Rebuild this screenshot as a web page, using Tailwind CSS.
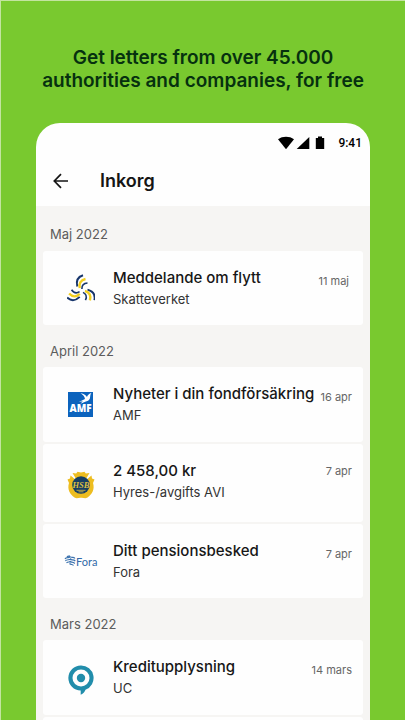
<!DOCTYPE html>
<html lang="en">

<head>
    <meta charset="UTF-8">
    <meta name="viewport" content="width=device-width, initial-scale=1.0">
    <title>Inkorg</title>
    <script src="https://cdn.jsdelivr.net/npm/@tailwindcss/browser@4"></script>
</head>

<body class="bg-[#79c92f] font-['Inter',sans-serif]">
    <div class="flex h-screen flex-col overflow-hidden border-t border-l border-[#c3e4a0]">
        <h1 class="px-8 pt-[45px] pb-[31px] text-center text-[19px] leading-[23px] font-semibold text-[#06310f]">
            Get letters from over 45.000<br>authorities and companies, for free
        </h1>

        <main class="mx-[35px] min-h-0 flex-1 overflow-hidden rounded-t-[24px] bg-[#fefefe]">
            <!-- status bar -->
            <div class="flex h-10 items-center justify-end pr-2 font-['Roboto',sans-serif] text-[12px] font-medium text-black">
                <svg class="mr-[2px] h-4 w-4" viewBox="0 0 16 16">
                    <path d="M0 4.3C4.5 1 11.500 1 16 4.300L8 14.200Z" />
                </svg>
                <svg class="mr-[5px] h-4 w-[14px]" viewBox="0 0 14 16">
                    <path d="M13.300 2V14H.7Z" />
                </svg>
                <svg class="mr-[13px] h-4 w-[10px]" viewBox="0 0 10 16">
                    <path d="M3 1.500H7V3H9.200V14H.8V3H3Z" />
                </svg>
                <span>9:41</span>
            </div>

            <header class="flex h-[43px] items-start gap-[30px] pl-4 pt-[6px]">
                <button type="button" aria-label="Back" class="h-6 w-[18px]">
                    <svg class="h-6 w-[18px]" viewBox="0 0 18 24" fill="none" stroke="#151515" stroke-width="1.700">
                        <path d="M16 12H2.500M9 5.200L2.300 12L9 18.800" />
                    </svg>
                </button>
                <h2 class="text-[18px] leading-6 font-semibold text-[#151515]">Inkorg</h2>
            </header>

            <div class="bg-[#f6f5f3] px-[7px]">
                <h3 class="flex h-[45px] items-center pt-3 pl-[7px] text-[13px] text-[#5c5c5c]">Maj 2022</h3>
                <ul>
                    <li class="rounded-[3px] bg-[#fefefe]">
                        <a href="#" class="flex min-h-[74px] items-start pr-[14px]">
                            <span class="flex w-[70px] shrink-0 items-center justify-center self-stretch pl-[5px]">
                                <svg class="h-7 w-7" viewBox="-1 0 28 28" fill="none" stroke-width="2">
                                    <g id="arm">
                                        <path stroke="#17356b" d="M15 1.200C10 2.800 7.800 6.500 9.300 12.500" />
                                        <path stroke="#f3cf21" stroke-width="2.400" d="M17.500 5C12.500 6.200 10.600 9.500 11.800 14" />
                                        <path stroke="#17356b" stroke-width="1.600" d="M19.500 9C15.800 9.200 13.700 11.300 13.900 15" />
                                    </g>
                                    <use href="#arm" transform="rotate(120 13.500 17)" />
                                    <use href="#arm" transform="rotate(240 13.500 17)" />
                                </svg>
                            </span>
                            <span class="min-w-0 flex-1 pt-[15px]">
                                <span class="block text-[15px] leading-6 font-medium text-[#171717]">Meddelande om flytt</span>
                                <span class="block text-[13px] leading-[18px] text-[#333]">Skatteverket</span>
                            </span>
                            <span class="pt-[21px] text-[11px] leading-[18px] text-[#666]">11 maj</span>
                        </a>
                    </li>
                </ul>

                <h3 class="flex h-[42px] items-center pt-3 pl-[7px] text-[13px] text-[#5c5c5c]">April 2022</h3>
                <ul class="flex flex-col gap-[2px]">
                    <li class="rounded-[3px] bg-[#fefefe]">
                        <a href="#" class="flex min-h-[75px] items-start pr-[11px]">
                            <span class="flex w-[70px] shrink-0 items-center justify-center self-stretch pl-[5px]">
                                <svg class="h-[25px] w-[25px]" viewBox="0 0 24 24">
                                    <rect width="24" height="24" fill="#0c63bd" />
                                    <path fill="#fff" d="M12 1.200C15.500 1.800 17.300 3 18.200 4.800C19 2.800 20.300 1.600 22.500 1C21 2.600 21.600 4.500 21 6.200C20.400 8.300 18.500 8.800 16.500 9.300L12 11.200L14.200 8.800L10.500 9.500L16.300 6.600C16 4.500 14.500 2.600 12 1.200Z" />
                                    <text x="12" y="19.500" text-anchor="middle" font-family="Open Sans, sans-serif" font-size="9.500" font-weight="800" fill="#fff">AMF</text>
                                </svg>
                            </span>
                            <span class="min-w-0 flex-1 pt-[15px]">
                                <span class="block text-[15px] leading-6 font-medium whitespace-nowrap text-[#171717]">Nyheter i din fondförsäkring</span>
                                <span class="block text-[13px] leading-[18px] text-[#333]">AMF</span>
                            </span>
                            <span class="pt-[21px] text-[11px] leading-[18px] text-[#666]">16 apr</span>
                        </a>
                    </li>
                    <li class="rounded-[3px] bg-[#fefefe]">
                        <a href="#" class="flex min-h-[78px] items-start pr-[11px]">
                            <span class="flex w-[70px] shrink-0 items-center justify-center self-stretch pt-1 pl-[5px]">
                                <svg class="h-7 w-7" viewBox="0 0 28 28">
                                    <path fill="#edbd20" d="M7 4.500L5.500 2L9.200 2.600L10.500 .8L14 1.500L17.500 .8L18.800 2.600L22.500 2L21 4.500L19.500 7H8.500Z" />
                                    <path fill="#edbd20" d="M3.500 4.500L6 6.500L7.500 8L20.500 8L22 6.500L24.500 4.500L25 7.500L27.500 8.500L26 12C28 18 25 23.500 20.500 26.500C18 28 16 26.300 14 26.800C12 26.300 10 28 7.500 26.500C3 23.500 0 18 2 12L.5 8.500L3 7.500Z" />
                                    <circle cx="14" cy="14" r="8.800" fill="#173f63" />
                                    <text x="14" y="17" text-anchor="middle" font-family="Liberation Serif, serif" font-size="8.500" font-style="italic" font-weight="700" fill="#d9bd43">HSB</text>
                                    <path fill="none" stroke="#d9bd43" stroke-width=".8" d="M9.500 19.300H18.500M11.500 20.800H16.500" />
                                </svg>
                            </span>
                            <span class="min-w-0 flex-1 pt-[15px]">
                                <span class="block text-[15px] leading-6 font-medium text-[#171717]">2 458,00 kr</span>
                                <span class="block text-[13px] leading-[18px] text-[#333]">Hyres-/avgifts AVI</span>
                            </span>
                            <span class="pt-[18px] text-[11px] leading-[18px] text-[#666]">7 apr</span>
                        </a>
                    </li>
                    <li class="rounded-[3px] bg-[#fefefe]">
                        <a href="#" class="flex min-h-[74px] items-start pr-[11px]">
                            <span class="flex w-[70px] shrink-0 items-center justify-center self-stretch pl-[5px]">
                                <svg class="h-4 w-9" viewBox="0 0 36 16">
                                    <g fill="none" stroke="#3b72ae" stroke-width="1.200" transform="translate(2 0)">
                                        <path d="M0 6C1.500 3 4 6 5.500 3.500M.3 8C2 5.500 4.500 8 6 5.500M1.500 10C3 8 4.500 10 6 8M2 4C3 2.500 4 3.500 5 2.800" />
                                        <path d="M5.500 4C7.500 5 8.500 3.500 10 5.500M5 6.300C7 7.500 8.500 6 10.300 8M4.500 8.500C6 9.800 8 8.500 9.800 10.500M4.500 10.500C6 12 7.500 11 8.500 12.500" />
                                    </g>
                                    <text x="13" y="12.500" font-family="Lato, sans-serif" font-size="11" fill="#326aa8">Fora</text>
                                </svg>
                            </span>
                            <span class="min-w-0 flex-1 pt-[15px]">
                                <span class="block text-[15px] leading-6 font-medium text-[#171717]">Ditt pensionsbesked</span>
                                <span class="block text-[13px] leading-[18px] text-[#333]">Fora</span>
                            </span>
                            <span class="pt-[21px] text-[11px] leading-[18px] text-[#666]">7 apr</span>
                        </a>
                    </li>
                </ul>

                <h3 class="flex h-[42px] items-center pt-3 pl-[7px] text-[13px] text-[#5c5c5c]">Mars 2022</h3>
                <ul class="flex flex-col gap-[2px]">
                    <li class="rounded-[3px] bg-[#fefefe]">
                        <a href="#" class="flex min-h-[75px] items-start pr-[11px]">
                            <span class="flex w-[70px] shrink-0 items-center justify-center self-stretch pt-1 pl-[5px]">
                                <svg class="h-[30px] w-[26px]" viewBox="0 0 26 30">
                                    <path fill="#218dab" d="M13 .5A12.500 12.500 0 0 1 17.500 24.700C17 26.500 15.500 28.500 12.700 29.800V25.500A12.500 12.500 0 0 1 13 .5Z" />
                                    <circle cx="13" cy="13" r="8.500" fill="#fefefe" />
                                    <circle cx="13" cy="13" r="4.200" fill="#218dab" />
                                </svg>
                            </span>
                            <span class="min-w-0 flex-1 pt-[15px]">
                                <span class="block text-[15px] leading-6 font-medium text-[#171717]">Kreditupplysning</span>
                                <span class="block text-[13px] leading-[18px] text-[#333]">UC</span>
                            </span>
                            <span class="pt-[21px] text-[11px] leading-[18px] text-[#666]">14 mars</span>
                        </a>
                    </li>
                    <li class="h-[75px] rounded-[3px] bg-[#fefefe]"></li>
                </ul>
            </div>
        </main>
    </div>
</body>

</html>
